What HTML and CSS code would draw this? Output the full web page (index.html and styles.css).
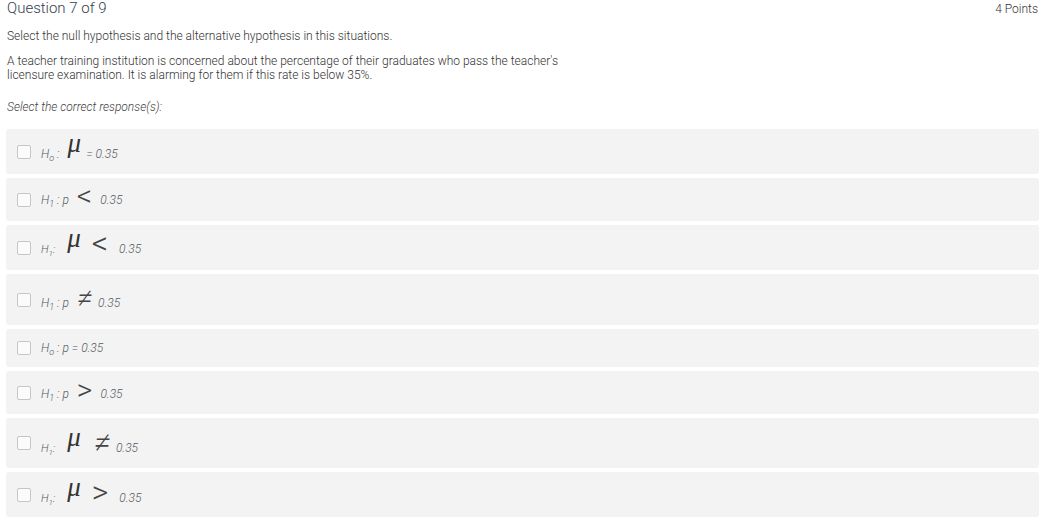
FILE: index.html
```html
<!DOCTYPE html>
<html lang="en">
<head>
<meta charset="utf-8">
<title>Question 7 of 9</title>
<link rel="stylesheet" href="styles.css">
</head>
<body>
<div class="page">
  <header class="head">
    <h1 class="title">Question 7 of 9</h1>
    <span class="points">4 Points</span>
  </header>
  <p class="prompt">Select the null hypothesis and the alternative hypothesis in this situations.</p>
  <p class="prompt prompt--body">A teacher training institution is concerned about the percentage of their graduates who pass the teacher's<br>licensure examination. It is alarming for them if this rate is below 35%.</p>
  <p class="instr">Select the correct response(s):</p>

  <ul class="opts">
    <li class="opt opt--45">
      <span class="chk"></span>
      <span class="lbl lbl--d2"><span class="v">H<sub>o</sub></span><span class="v"> :</span><span class="mu mu--a">μ</span><span class="v num num--eq">= 0.35</span></span>
    </li>
    <li class="opt opt--43">
      <span class="chk"></span>
      <span class="lbl"><span class="v">H<sub>1</sub> : p</span><span class="op op--lt">&lt;</span><span class="v num num--a">0.35</span></span>
    </li>
    <li class="opt opt--45">
      <span class="chk"></span>
      <span class="lbl lbl--d2"><span class="v v--sm">H<sub>1</sub>:</span><span class="mu mu--b">μ</span><span class="op op--lt2">&lt;</span><span class="v num num--b">0.35</span></span>
    </li>
    <li class="opt opt--51">
      <span class="chk"></span>
      <span class="lbl lbl--d4"><span class="v">H<sub>1</sub> : p</span><span class="op op--ne">≠</span><span class="v num num--c">0.35</span></span>
    </li>
    <li class="opt opt--38">
      <span class="chk"></span>
      <span class="lbl"><span class="v v--lg">H<sub>o</sub> : p = 0.35</span></span>
    </li>
    <li class="opt opt--43">
      <span class="chk"></span>
      <span class="lbl lbl--d1"><span class="v">H<sub>1</sub> : p</span><span class="op op--gt">&gt;</span><span class="v num num--a">0.35</span></span>
    </li>
    <li class="opt opt--50">
      <span class="chk"></span>
      <span class="lbl lbl--d5"><span class="v v--sm">H<sub>1</sub>:</span><span class="mu mu--b">μ</span><span class="op op--ne2">≠</span><span class="v num num--d">0.35</span></span>
    </li>
    <li class="opt opt--45">
      <span class="chk"></span>
      <span class="lbl lbl--d4"><span class="v v--sm">H<sub>1</sub>:</span><span class="mu mu--b">μ</span><span class="op op--gt2">&gt;</span><span class="v num num--b">0.35</span></span>
    </li>
  </ul>
</div>
</body>
</html>
```

FILE: styles.css
```css
* { box-sizing: border-box; }

body {
  margin: 0;
  background: #ffffff;
  font-family: Roboto, "Liberation Sans", sans-serif;
  font-weight: 300;
  color: #333333;
}

.page {
  padding: 0 3px 0 6px;
}

.head {
  display: flex;
  justify-content: space-between;
  align-items: baseline;
  padding: 0 1px 0 1px;
}

.title {
  margin: 0;
  font-size: 15px;
  line-height: 16px;
  font-weight: 300;
  color: #34404c;
}

.points {
  font-size: 12px;
  line-height: 16px;
  color: #333333;
}

.prompt {
  margin: 12px 0 0 1px;
  font-size: 12px;
  line-height: 14px;
  color: #333333;
}

.prompt--body {
  margin-top: 11px;
}

.instr {
  margin: 18px 0 0 1px;
  font-size: 12px;
  line-height: 14px;
  font-style: italic;
  color: #444444;
}

.opts {
  list-style: none;
  margin: 15px 0 0 0;
  padding: 0;
  display: flex;
  flex-direction: column;
  gap: 4px;
}

.opt {
  display: flex;
  align-items: center;
  gap: 10px;
  padding: 0 11px;
  background: #f3f3f3;
  border-radius: 3px;
}

.opt--38 { height: 38px; }
.opt--43 { height: 43px; }
.opt--45 { height: 45px; }
.opt--50 { height: 50px; }
.opt--51 { height: 51px; }

.chk {
  flex: none;
  width: 14px;
  height: 14px;
  border: 1px solid #c6c6c6;
  border-radius: 2px;
  background: #fbfbfb;
}

.lbl {
  display: block;
  font-size: 12px;
  line-height: 14px;
  font-style: italic;
  color: #555a62;
  white-space: nowrap;
}

.lbl--d1 { padding-top: 2px; }
.lbl--d2 { padding-top: 4px; }
.lbl--d4 { padding-top: 7px; }
.lbl--d5 { padding-top: 10px; }

.v sub {
  font-size: 9px;
  line-height: 0;
  vertical-align: -3px;
}

.v--sm { font-size: 11px; }
.v--sm sub { font-size: 8px; }
.v--lg { font-size: 12px; }

.mu {
  font-family: "Liberation Serif", "DejaVu Serif", serif;
  font-style: italic;
  font-weight: 400;
  font-size: 27px;
  line-height: 0;
  color: #333333;
  position: relative;
  top: -6px;
}

.mu--a { margin-left: 8px; }
.mu--b { margin-left: 12px; }

.op {
  font-family: Roboto, "Liberation Sans", sans-serif;
  font-style: normal;
  font-weight: 300;
  line-height: 0;
  color: #444444;
  position: relative;
}

.op--lt, .op--gt { font-size: 30px; margin-left: 8px; top: 2px; }
.op--lt2, .op--gt2 { font-size: 32px; margin-left: 11px; top: 1px; }
.op--ne { font-size: 30px; margin-left: 8px; top: 1px; font-style: italic; }
.op--ne2 { font-size: 32px; margin-left: 13px; top: 1px; font-style: italic; }

.num { font-size: 12px; }
.num--eq { margin-left: 5px; }
.num--a { margin-left: 8px; }
.num--b { margin-left: 11px; }
.num--c { margin-left: 5px; }
.num--d { margin-left: 5px; }
```
